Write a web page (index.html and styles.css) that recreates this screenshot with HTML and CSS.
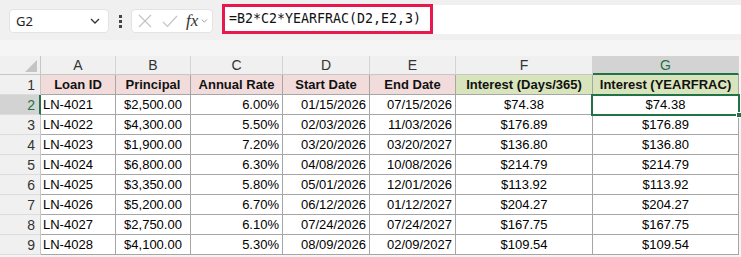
FILE: index.html
```html
<!DOCTYPE html>
<html lang="en">
<head>
	<meta charset="UTF-8">
	<title>YEARFRAC</title>
	<link rel="stylesheet" href="styles.css">
</head>
<body>
	<div class="toolbar">
		<div class="namebox">
			<span>G2</span>
			<svg width="10" height="6" viewBox="0 0 10 6"><polyline points="1,1 5,5 9,1" fill="none" stroke="#333" stroke-width="1.3"/></svg>
		</div>
		<div class="dots"><i></i><i></i><i></i></div>
		<div class="fnbox">
			<svg class="ic" width="16" height="16" viewBox="0 0 16 16"><path d="M2 2 L14 14 M14 2 L2 14" stroke="#c4c4c4" stroke-width="1.2" fill="none"/></svg>
			<svg class="ic" width="16" height="16" viewBox="0 0 16 16"><polyline points="1,9 5.5,13.5 15,3" stroke="#c4c4c4" stroke-width="1.2" fill="none"/></svg>
			<span class="fx">fx</span>
			<svg width="9" height="6" viewBox="0 0 9 6"><polyline points="1,1 4.5,4.5 8,1" fill="none" stroke="#888" stroke-width="1.1"/></svg>
		</div>
		<div class="formula">
			<div class="formula-hl"><span class="ftext">=B2*C2*YEARFRAC(D2,E2,3)</span></div>
		</div>
	</div>

	<div class="sheet">
		<div class="corner"><span class="tri"></span></div>
		<div class="colhdr">A</div>
		<div class="colhdr">B</div>
		<div class="colhdr">C</div>
		<div class="colhdr">D</div>
		<div class="colhdr">E</div>
		<div class="colhdr">F</div>
		<div class="colhdr sel-col">G</div>

		<div class="rowhdr">1</div>
		<div class="cell th pink">Loan ID</div>
		<div class="cell th pink">Principal</div>
		<div class="cell th pink">Annual Rate</div>
		<div class="cell th pink">Start Date</div>
		<div class="cell th pink">End Date</div>
		<div class="cell th green">Interest (Days/365)</div>
		<div class="cell th green">Interest (YEARFRAC)</div>

		<div class="rowhdr sel-row">2</div>
		<div class="cell l">LN-4021</div><div class="cell c">$2,500.00</div><div class="cell r">6.00%</div><div class="cell r">01/15/2026</div><div class="cell r">07/15/2026</div><div class="cell c">$74.38</div><div class="cell c">$74.38</div>

		<div class="rowhdr">3</div>
		<div class="cell l">LN-4022</div><div class="cell c">$4,300.00</div><div class="cell r">5.50%</div><div class="cell r">02/03/2026</div><div class="cell r">11/03/2026</div><div class="cell c">$176.89</div><div class="cell c">$176.89</div>

		<div class="rowhdr">4</div>
		<div class="cell l">LN-4023</div><div class="cell c">$1,900.00</div><div class="cell r">7.20%</div><div class="cell r">03/20/2026</div><div class="cell r">03/20/2027</div><div class="cell c">$136.80</div><div class="cell c">$136.80</div>

		<div class="rowhdr">5</div>
		<div class="cell l">LN-4024</div><div class="cell c">$6,800.00</div><div class="cell r">6.30%</div><div class="cell r">04/08/2026</div><div class="cell r">10/08/2026</div><div class="cell c">$214.79</div><div class="cell c">$214.79</div>

		<div class="rowhdr">6</div>
		<div class="cell l">LN-4025</div><div class="cell c">$3,350.00</div><div class="cell r">5.80%</div><div class="cell r">05/01/2026</div><div class="cell r">12/01/2026</div><div class="cell c">$113.92</div><div class="cell c">$113.92</div>

		<div class="rowhdr">7</div>
		<div class="cell l">LN-4026</div><div class="cell c">$5,200.00</div><div class="cell r">6.70%</div><div class="cell r">06/12/2026</div><div class="cell r">01/12/2027</div><div class="cell c">$204.27</div><div class="cell c">$204.27</div>

		<div class="rowhdr">8</div>
		<div class="cell l">LN-4027</div><div class="cell c">$2,750.00</div><div class="cell r">6.10%</div><div class="cell r">07/24/2026</div><div class="cell r">07/24/2027</div><div class="cell c">$167.75</div><div class="cell c">$167.75</div>

		<div class="rowhdr">9</div>
		<div class="cell l">LN-4028</div><div class="cell c">$4,100.00</div><div class="cell r">5.30%</div><div class="cell r">08/09/2026</div><div class="cell r">02/09/2027</div><div class="cell c">$109.54</div><div class="cell c">$109.54</div>

		<div class="selection"><span class="handle"></span></div>
	</div>
</body>
</html>
```

FILE: styles.css
```css
*{
	margin: 0;
	padding: 0;
	box-sizing: border-box;
}
body{
	width: 741px;
	height: 257px;
	overflow: hidden;
	background-color: #f5f5f5;
	font-family: "Liberation Sans", Arial, sans-serif;
	color: #111;
}

/* formula bar */
.toolbar{
	height: 40px;
	display: flex;
	align-items: center;
	padding-left: 9px;
	background-color: #f0f0f0;
}
.namebox{
	width: 100px;
	height: 24px;
	margin-top: 2px;
	background-color: #fff;
	border: 1px solid #e3e3e3;
	border-radius: 4px;
	display: flex;
	align-items: center;
	justify-content: space-between;
	padding: 0 8px 0 6px;
	font-family: "Noto Sans", "Open Sans", sans-serif;
	font-size: 13px;
	color: #222;
}
.dots{
	width: 22px;
	display: flex;
	flex-direction: column;
	align-items: center;
	gap: 2px;
	margin-top: 2px;
}
.dots i{
	display: block;
	width: 3px;
	height: 3px;
	background-color: #444;
}
.fnbox{
	width: 82px;
	height: 24px;
	margin-top: 2px;
	background-color: #fff;
	border: 1px solid #e3e3e3;
	border-radius: 4px;
	display: flex;
	align-items: center;
	padding: 0 4px 0 5px;
	gap: 9px;
}
.fnbox .ic{
	flex: none;
}
.fx{
	font-family: "Liberation Serif", serif;
	font-style: italic;
	font-size: 17px;
	color: #333;
	margin-left: -1px;
	margin-right: -6px;
	line-height: 20px;
}
.formula{
	flex: 1;
	min-width: 0;
	height: 29px;
	margin-left: 9px;
	margin-top: -1px;
	background-color: #fff;
	display: flex;
}
.formula-hl{
	flex: none;
	width: 211px;
	min-width: 0;
	height: 30px;
	margin-top: -1px;
	border: 3px solid #e8184d;
	padding-left: 4px;
	overflow: hidden;
	white-space: nowrap;
}
.ftext{
	font-family: "DejaVu Sans Mono", monospace;
	font-size: 13.3px;
	line-height: 24px;
	color: #111;
}

/* grid */
.sheet{
	position: relative;
	margin-top: 16px;
	display: grid;
	grid-template-columns: 41px 75px 75px 92px 87px 86px 137px 146px;
	grid-template-rows: 19px repeat(9, 20px);
	font-size: 13px;
	background-color: #fff;
	width: 739px;
}
.corner{
	background-color: #f0f0f0;
	border-right: 1px solid #c6c6c6;
	border-bottom: 1px solid #c6c6c6;
	display: flex;
	align-items: flex-end;
	justify-content: flex-end;
	padding: 0 3px 2px 0;
}
.tri{
	width: 0;
	height: 0;
	border-left: 12px solid transparent;
	border-bottom: 12px solid #c4c4c4;
}
.colhdr{
	background-color: #f0f0f0;
	border-right: 1px solid #d4d4d4;
	border-bottom: 1px solid #c6c6c6;
	text-align: center;
	line-height: 19px;
	font-size: 14px;
	color: #333;
}
.sel-col{
	background-color: #d3d3d3;
	color: #217346;
	border-bottom: 2px solid #217346;
}
.rowhdr{
	background-color: #f0f0f0;
	border-right: 1px solid #c6c6c6;
	border-bottom: 1px solid #dcdcdc;
	text-align: right;
	padding-right: 5px;
	line-height: 20px;
	font-size: 14px;
	color: #333;
}
.sel-row{
	background-color: #d3d3d3;
	color: #217346;
	border-right: 2px solid #217346;
	padding-right: 4px;
}
.cell{
	border-right: 1px solid #a6a6a6;
	border-bottom: 1px solid #a6a6a6;
	line-height: 20px;
	white-space: nowrap;
	overflow: hidden;
	color: #000;
}
.th{
	font-weight: bold;
	text-align: center;
	color: #111;
}
.pink{
	background-color: #f2dcdb;
}
.green{
	background-color: #d8e4bc;
}
.l{
	padding-left: 2px;
}
.c{
	text-align: center;
}
.r{
	text-align: right;
	padding-right: 3px;
}
.selection{
	position: absolute;
	left: 591px;
	top: 38px;
	width: 149px;
	height: 22px;
	border: 2px solid #217346;
}
.handle{
	position: absolute;
	right: -4px;
	bottom: -4px;
	width: 6px;
	height: 6px;
	background-color: #217346;
	border: 1px solid #fff;
}
```
